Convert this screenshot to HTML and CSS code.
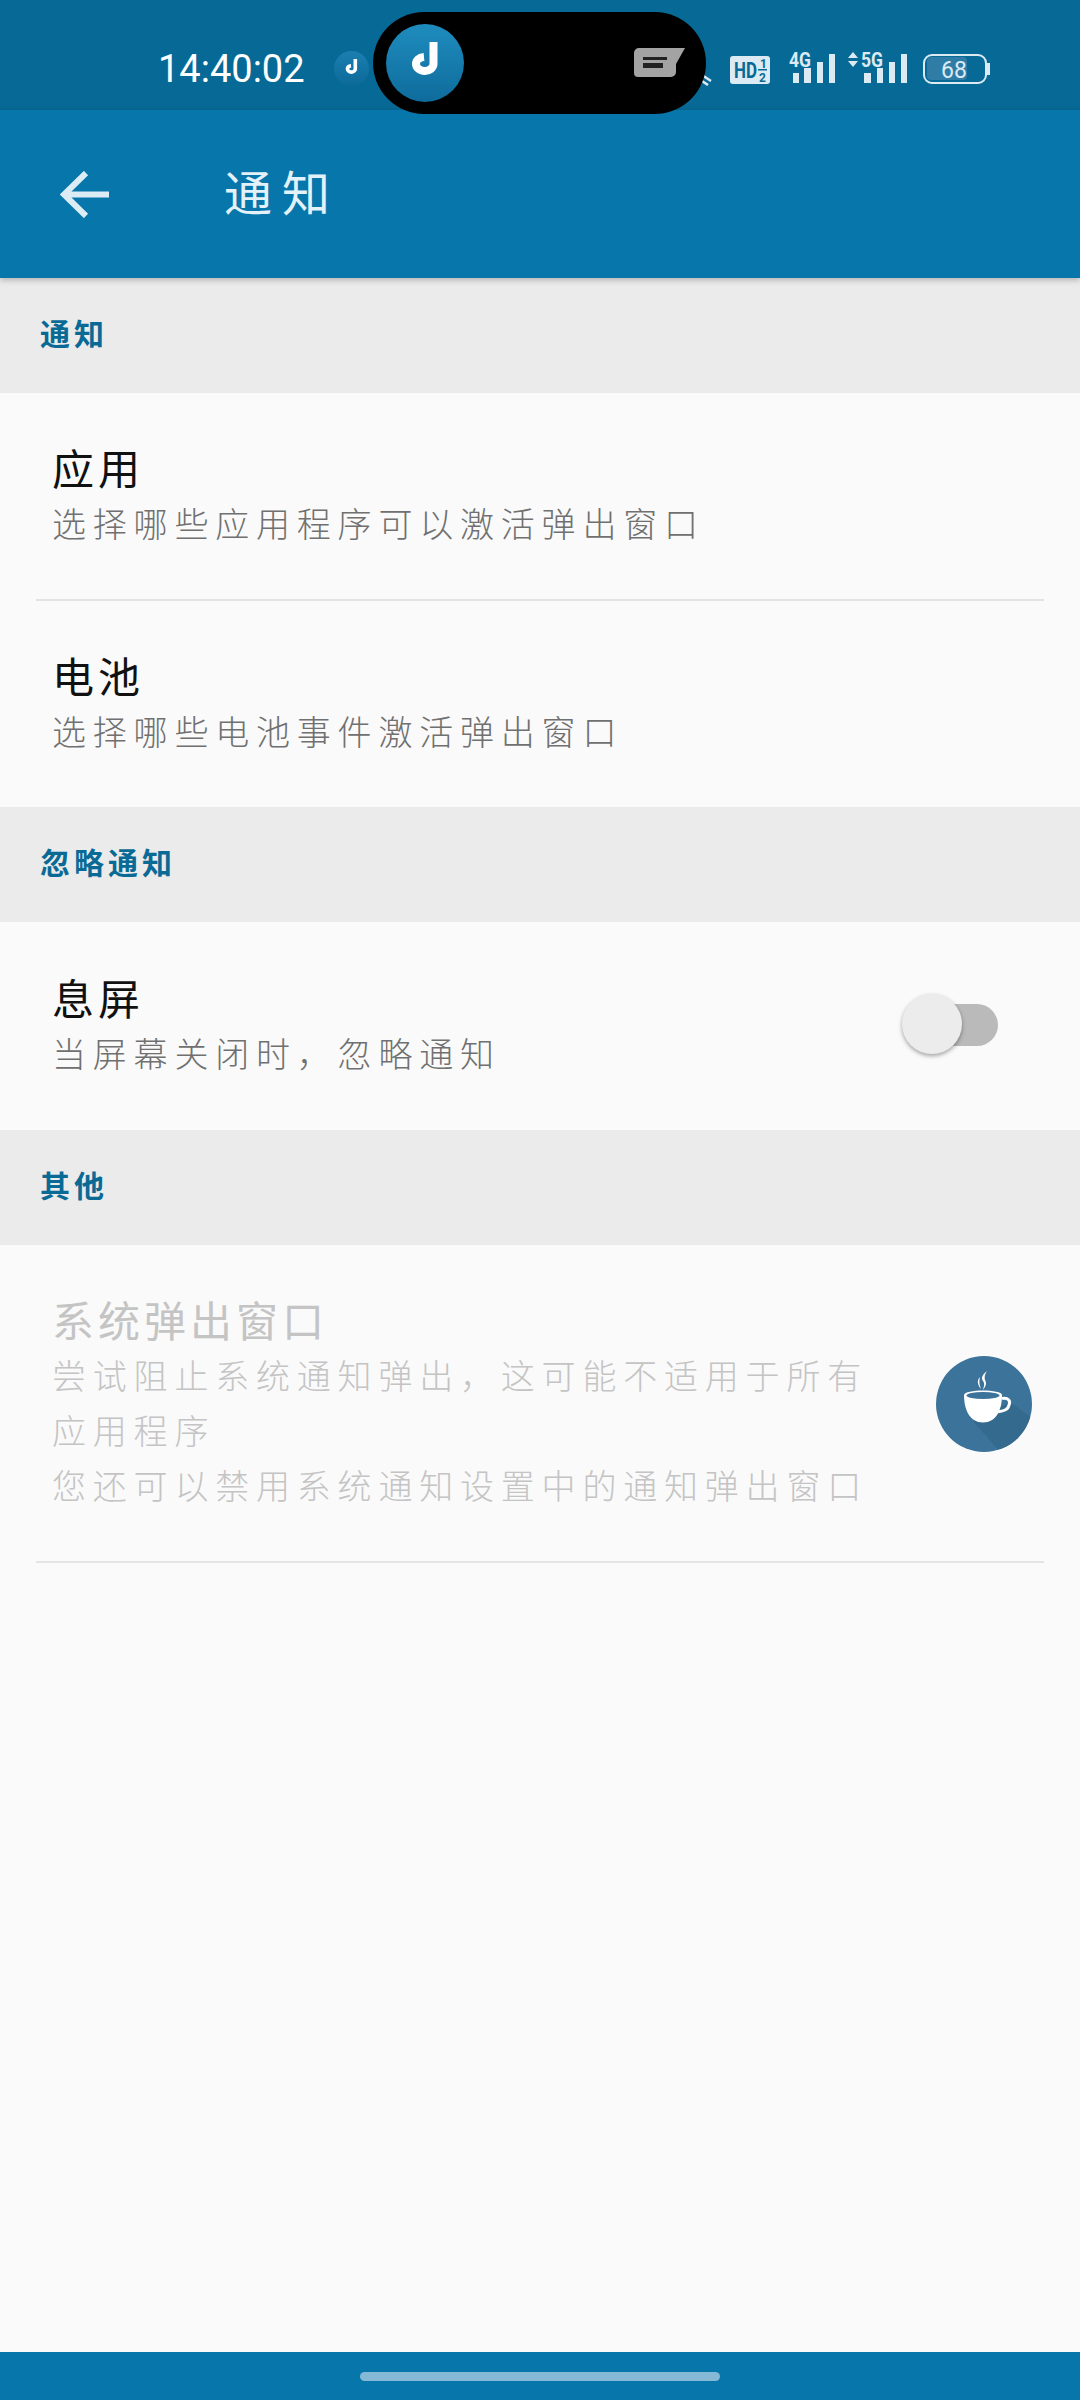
FILE: index.html
```html
<!DOCTYPE html>
<html lang="zh">

<head>
    <meta charset="UTF-8">
    <title>通知</title>
    <link rel="stylesheet" href="styles.css">
</head>

<body>
    <div class="screen">
        <div class="status-bar">
            <span class="clock">14:40:02</span>
            <div class="mini-d">
                <svg width="35" height="35" viewBox="0 0 78 78">
                    <path d="M47.5 18V40C47.5 44 43 47 39 47C33 47 30 43 30 40C30 36 33 33.5 38 33" fill="none" stroke="#fff" stroke-width="8" />
                </svg>
            </div>
            <div class="island">
                <div class="island-d">
                    <svg width="78" height="78" viewBox="0 0 78 78">
                        <path d="M47.5 18V40C47.5 44 43 47 39 47C33 47 30 43 30 40C30 36 33 33.5 38 33" fill="none" stroke="#fff" stroke-width="8" />
                    </svg>
                </div>
                <svg class="island-msg" width="51" height="29" viewBox="0 0 51 29">
                    <path d="M5 0H51L42 16V24a5 5 0 0 1-5 5H4a4 4 0 0 1-4-4V5a5 5 0 0 1 5-5z" fill="#a3a3a3" />
                    <rect x="9" y="9" width="24" height="3" fill="#222" />
                    <rect x="9" y="15" width="20" height="5" fill="#222" />
                </svg>
            </div>
            <svg class="wifi-bit" width="10" height="14" viewBox="0 0 10 14">
                <path d="M0 3L9 9M0 9L6 13" fill="none" stroke="#dcebf3" stroke-width="2.5" />
            </svg>
            <div class="status-icons">
                <svg class="icon-hd" width="40" height="28" viewBox="0 0 40 28">
                    <rect width="40" height="28" rx="3" fill="#dcebf3" />
                    <text x="4" y="22" textLength="23" lengthAdjust="spacingAndGlyphs" class="hd-text">HD</text>
                    <text x="30" y="12" class="hd-small">1</text>
                    <text x="29" y="26" class="hd-small">2</text>
                    <rect x="28" y="13" width="9" height="1.5" fill="#076a96" />
                </svg>
                <svg class="icon-4g" width="47" height="38" viewBox="0 -6 47 38">
                    <text x="0" y="15" textLength="22" lengthAdjust="spacingAndGlyphs" class="net-text">4G</text>
                    <rect x="4" y="21" width="6" height="10" />
                    <rect x="15" y="16" width="7" height="15" />
                    <rect x="28" y="10" width="6" height="21" />
                    <rect x="40" y="2" width="6" height="29" />
                </svg>
                <svg class="icon-5g" width="60" height="38" viewBox="0 -6 60 38">
                    <path d="M0 6L5 0L10 6zM0 9L5 15L10 9z" />
                    <text x="13" y="15" textLength="22" lengthAdjust="spacingAndGlyphs" class="net-text">5G</text>
                    <rect x="16" y="21" width="7" height="10" />
                    <rect x="29" y="16" width="6" height="15" />
                    <rect x="41" y="10" width="6" height="21" />
                    <rect x="53" y="2" width="6" height="29" />
                </svg>
                <svg class="icon-battery" width="68" height="30" viewBox="0 0 68 30">
                    <rect x="4" y="3" width="40" height="23" rx="4" fill="#2f7ca6" />
                    <rect x="1" y="1" width="62" height="28" rx="8" fill="none" stroke="#dcebf3" stroke-width="2" />
                    <rect x="64" y="9" width="3" height="12" fill="#dcebf3" />
                    <text x="31" y="24" text-anchor="middle" class="battery-text">68</text>
                </svg>
            </div>
        </div>

        <div class="app-bar">
            <svg class="back" width="49" height="47" viewBox="0 0 49 47">
                <path d="M49 23.5H4M26 2L4 23.5L26 45" fill="none" stroke="#dcecf5" stroke-width="6" />
            </svg>
            <div class="app-title">通知</div>
        </div>

        <div class="content">
            <div class="section-head">通知</div>
            <div class="row">
                <div class="row-text">
                    <div class="row-title">应用</div>
                    <div class="row-sub">选择哪些应用程序可以激活弹出窗口</div>
                </div>
            </div>
            <div class="divider"></div>
            <div class="row">
                <div class="row-text">
                    <div class="row-title">电池</div>
                    <div class="row-sub">选择哪些电池事件激活弹出窗口</div>
                </div>
            </div>

            <div class="section-head">忽略通知</div>
            <div class="row row-toggle">
                <div class="row-text">
                    <div class="row-title">息屏</div>
                    <div class="row-sub">当屏幕关闭时，忽略通知</div>
                </div>
                <div class="switch">
                    <div class="knob"></div>
                </div>
            </div>

            <div class="section-head">其他</div>
            <div class="row row-disabled">
                <div class="row-text">
                    <div class="row-title">系统弹出窗口</div>
                    <div class="row-sub">尝试阻止系统通知弹出，这可能不适用于所有应用程序<br>您还可以禁用系统通知设置中的通知弹出窗口</div>
                </div>
                <svg class="coffee" width="96" height="96" viewBox="0 0 96 96">
                    <clipPath id="coffeeClip">
                        <circle cx="48" cy="48" r="48" />
                    </clipPath>
                    <circle cx="48" cy="48" r="48" fill="#3c739b" />
                    <path d="M74 46L96 62V96H64L37 65z" fill="#336a8e" clip-path="url(#coffeeClip)" />
                    <path d="M51 15C46 19 45 22 47 25C49 28 48 30 47 34C50 30 51 27 49 24C48 21 49 18 51 15z" fill="#fff" />
                    <path d="M44 21C41 24 41 28 45 33C43 28 43 25 44 21z" fill="#fff" />
                    <path d="M66 42.5C72 41 75 45 73 49C72 54 68 55 60 56" fill="none" stroke="#fff" stroke-width="3" />
                    <path d="M28 39C28 33 66 33 66 39C66 54 60 66.5 47 66.5C34 66.5 28 54 28 39z" fill="#fff" />
                    <ellipse cx="47" cy="39.5" rx="16.5" ry="3.5" fill="#3c739b" />
                </svg>
            </div>
            <div class="divider"></div>
        </div>

        <div class="nav-bar">
            <div class="nav-handle"></div>
        </div>
    </div>
</body>

</html>
```

FILE: styles.css
```css
body {
    margin: 0;
    font-family: "Noto Sans CJK SC", "Noto Sans", sans-serif;
}

.screen {
    width: 1080px;
    height: 2400px;
    display: flex;
    flex-direction: column;
    background-color: #fafafa;
}

/* status bar */
.status-bar {
    height: 110px;
    flex-shrink: 0;
    background-color: #076a96;
    display: flex;
    align-items: flex-start;
    color: #fff;
}

.clock {
    width: 176px;
    margin: 47px 0 0 158px;
    font-family: Roboto, sans-serif;
    font-size: 38px;
    line-height: 44px;
}

.mini-d {
    width: 35px;
    height: 35px;
    margin-top: 51px;
    border-radius: 50%;
    background: linear-gradient(#1a7fb0, #0c6a98);
}

.mini-d svg,
.island-d svg {
    display: block;
}

.island {
    width: 333px;
    height: 102px;
    margin: 12px 0 0 4px;
    padding: 0 21px 0 13px;
    box-sizing: border-box;
    border-radius: 51px;
    background-color: #000;
    display: flex;
    align-items: center;
    justify-content: space-between;
    position: relative;
    z-index: 2;
}

.island-d {
    width: 78px;
    height: 78px;
    border-radius: 50%;
    background: linear-gradient(#1f8cbe, #0e6c9c);
}

.island-msg {
    margin-top: -1px;
}

.wifi-bit {
    margin: 72px 0 0 -4px;
}

.status-icons {
    display: flex;
    align-items: flex-start;
    margin: 46px 0 0 18px;
    fill: #dcebf3;
}

.icon-hd {
    margin: 10px 19px 0 0;
}

.icon-4g {
    margin-right: 12px;
}

.icon-5g {
    margin-right: 15px;
}

.icon-battery {
    margin-top: 8px;
}

.hd-text {
    font: bold 22px Roboto, sans-serif;
    fill: #076a96;
}

.hd-small {
    font: bold 12px Roboto, sans-serif;
    fill: #076a96;
}

.net-text {
    font: bold 21px Roboto, sans-serif;
}

.battery-text {
    font: 23px Roboto, sans-serif;
}

/* app bar */
.app-bar {
    height: 168px;
    flex-shrink: 0;
    background-color: #0776ab;
    display: flex;
    align-items: center;
    box-shadow: 0 2px 6px rgba(0, 0, 0, 0.25);
    position: relative;
}

.back {
    margin-left: 60px;
}

.app-title {
    margin: -8px 0 0 115px;
    font-size: 48px;
    letter-spacing: 10px;
    color: #e3f1f8;
}

/* list */
.content {
    flex: 1;
}

.section-head {
    height: 115px;
    line-height: 109px;
    padding-left: 40px;
    background-color: #ebebeb;
    color: #0a6a96;
    font-size: 30px;
    font-weight: 700;
    letter-spacing: 4px;
}

.row {
    display: flex;
    align-items: center;
    justify-content: space-between;
    padding: 46px 52px 49px;
}

.row-toggle {
    padding: 47px 52px 50px;
}

.row-title {
    font-size: 42px;
    line-height: 56px;
    letter-spacing: 4px;
    color: #111;
}

.row-sub {
    font-size: 34px;
    font-weight: 300;
    line-height: 55px;
    letter-spacing: 6.8px;
    color: #707070;
}

.row-disabled .row-title,
.row-disabled .row-sub {
    color: #c4c4c4;
}

.row-disabled .row-text {
    width: 830px;
}

.divider {
    height: 2px;
    margin: 0 36px;
    background-color: #e4e4e4;
}

.switch {
    width: 88px;
    height: 42px;
    margin-right: 30px;
    border-radius: 21px;
    background-color: #bababa;
    position: relative;
}

.knob {
    position: absolute;
    left: -8px;
    top: -10px;
    width: 60px;
    height: 60px;
    border-radius: 50%;
    background-color: #ececec;
    box-shadow: 0 2px 4px rgba(0, 0, 0, 0.35);
}

.coffee {
    margin: 5px -4px 0 0;
}

/* bottom nav */
.nav-bar {
    height: 48px;
    flex-shrink: 0;
    background-color: #0776ab;
    display: flex;
    align-items: center;
    justify-content: center;
}

.nav-handle {
    width: 360px;
    height: 9px;
    border-radius: 5px;
    background-color: #85b9d5;
}
```
